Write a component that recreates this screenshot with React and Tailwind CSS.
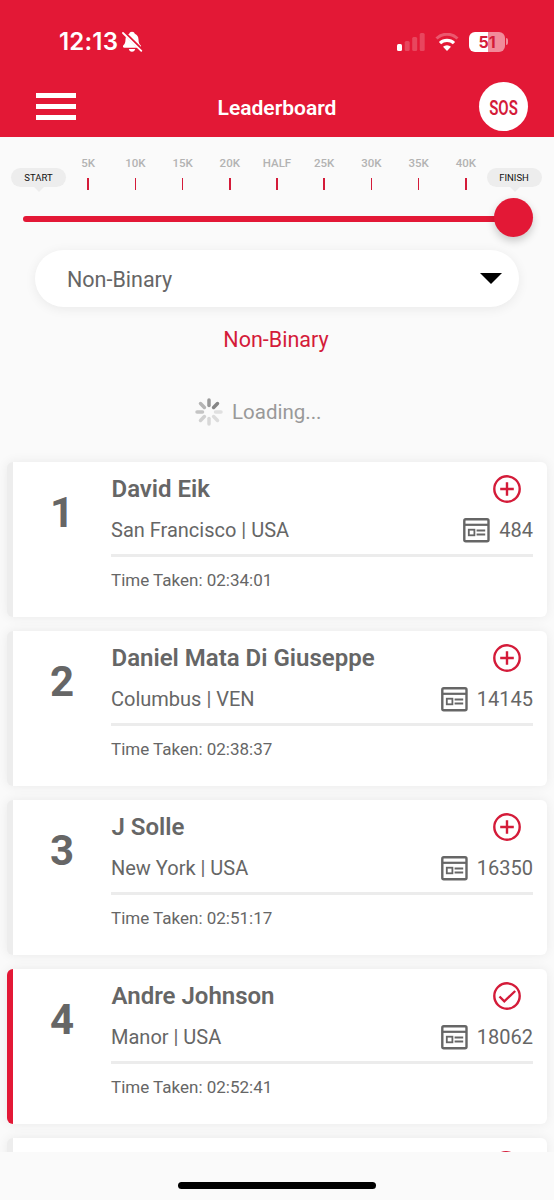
const marks = ['5K', '10K', '15K', '20K', 'HALF', '25K', '30K', '35K', '40K'];

const runners = [
  { rank: 1, name: 'David Eik', place: 'San Francisco | USA', bib: '484', time: '02:34:01' },
  { rank: 2, name: 'Daniel Mata Di Giuseppe', place: 'Columbus | VEN', bib: '14145', time: '02:38:37' },
  { rank: 3, name: 'J Solle', place: 'New York | USA', bib: '16350', time: '02:51:17' },
  { rank: 4, name: 'Andre Johnson', place: 'Manor | USA', bib: '18062', time: '02:52:41', following: true },
];

function BellOffIcon() {
  return (
    <svg width="21" height="22" viewBox="0 0 21 22" className="ml-[4px]">
      <path
        d="M10 .8c1.500 0 2.500.8 2.800 2 2.500 1 3.600 3 3.700 5.600.1 3 .6 4.400 2.100 5.900.9 1 .4 2.500-1 2.500H2.400c-1.400 0-1.900-1.500-1-2.500 1.500-1.500 2-2.900 2.100-5.900.1-2.600 1.200-4.600 3.700-5.600.3-1.200 1.300-2 2.800-2zM6.800 18.100h6.400c-.3 1.600-1.500 2.700-3.200 2.700s-2.900-1.100-3.200-2.700z"
        fill="white"
      />
      <path d="M2 1.500L20.500 19.500" stroke="#e31836" strokeWidth="3.200" />
      <path d="M1 2L19.300 19.800" stroke="white" strokeWidth="1.800" strokeLinecap="round" />
    </svg>
  );
}

function StatusIcons() {
  return (
    <div className="flex items-center">
      <svg width="28" height="18" viewBox="0 0 28 18" fill="white">
        <rect x="0" y="11" width="5" height="7" rx="1.500" />
        <rect x="7.700" y="8" width="5" height="10" rx="1.500" opacity=".2" />
        <rect x="15.200" y="4" width="5" height="14" rx="1.500" opacity=".2" />
        <rect x="22.700" y="0" width="5" height="18" rx="1.500" opacity=".2" />
      </svg>
      <svg width="24" height="18" viewBox="0 0 24 18" fill="none" stroke="white" className="ml-[10px]">
        <path d="M1.500 5.500a15 15 0 0 1 21 0" strokeWidth="3" opacity=".28" />
        <path d="M5 10.200a10 10 0 0 1 14 0" strokeWidth="3.200" />
        <path d="M12 18l-4-4.200a5.800 5.800 0 0 1 8 0z" fill="white" stroke="none" />
      </svg>
      <div className="ml-[10px] flex h-5 w-9 items-center justify-center rounded-[6px] bg-linear-to-r from-white from-52% to-[#f18b9a] to-52% font-[Inter] text-[16px] font-bold text-[#d41b39]">
        51
      </div>
      <div className="ml-px h-[7px] w-[2px] rounded-r-full bg-[#f18b9a]"></div>
    </div>
  );
}

function Header() {
  return (
    <header className="h-[137px] bg-[#e31836] text-white">
      <div className="flex h-[83px] items-center justify-between pr-[46px] pl-[59px]">
        <div className="flex items-center font-[Inter] text-[24px] font-semibold tracking-[0.2px]">
          12:13
          <BellOffIcon />
        </div>
        <StatusIcons />
      </div>
      <div className="-mt-px grid h-[46px] grid-cols-3 items-center pr-[26px] pl-[36px]">
        <div className="flex w-10 flex-col gap-[6px]">
          <span className="h-[5px] bg-white"></span>
          <span className="h-[5px] bg-white"></span>
          <span className="h-[5px] bg-white"></span>
        </div>
        <h1 className="mt-[4px] -ml-[10px] text-center text-[21px] font-semibold">Leaderboard</h1>
        <button className="size-[49px] justify-self-end rounded-full bg-white text-[20px] font-semibold text-[#d41b39]">
          <span className="block scale-x-75 pt-[2px]">SOS</span>
        </button>
      </div>
    </header>
  );
}

function Bubble({ children }) {
  return (
    <div className="relative mt-[31px] flex h-[19px] w-[55px] items-center justify-center rounded-full bg-[#ededed] pt-px text-[9.5px] text-[#111]">
      {children}
      <span className="absolute top-[19px] left-[23px] border-x-[5px] border-t-[5px] border-x-transparent border-t-[#ededed]"></span>
    </div>
  );
}

function DistanceSlider() {
  return (
    <section className="h-[113px]">
      <div className="flex h-[61px] pl-[11px]">
        <Bubble>START</Bubble>
        <div className="-mr-[3px] -ml-[1.5px] flex w-[425px]">
          {marks.map((mark) => (
            <div key={mark} className="flex flex-1 flex-col items-center pt-[18px]">
              <span className="text-[11.5px] leading-4 font-medium text-[#b3b3b3]">{mark}</span>
              <span className="mt-[7px] h-3 w-[1.5px] bg-[#d41b39]"></span>
            </div>
          ))}
        </div>
        <Bubble>FINISH</Bubble>
      </div>
      <div className="flex h-[39px] items-center pl-[23px]">
        <div className="mt-[3px] h-[6px] w-[480px] rounded-full bg-[#e31836]"></div>
        <div className="-ml-[9px] size-[39px] rounded-full bg-[#e31836] shadow-[0_4px_8px_rgba(0,0,0,0.2)]"></div>
      </div>
    </section>
  );
}

function Spinner() {
  const shades = ['#999', '#858585', '#e0e0e0', '#dcdcdc', '#d8d8d8', '#d0d0d0', '#c4c4c4', '#b4b4b4'];
  return (
    <svg width="28" height="28" viewBox="-14 -14 28 28" strokeWidth="3.500" strokeLinecap="round">
      {shades.map((shade, i) => (
        <path key={i} d="M0-6.500V-12" stroke={shade} transform={`rotate(${i * 45})`} />
      ))}
    </svg>
  );
}

function BibIcon() {
  return (
    <svg width="27" height="25" viewBox="0 0 27 25" fill="none" stroke="#666" className="mt-px">
      <rect x="1.300" y="1.300" width="24.200" height="22" rx="1.500" strokeWidth="2.400" />
      <path d="M1 6.800h25" strokeWidth="2.200" />
      <rect x="5.800" y="11.700" width="5.600" height="5.600" strokeWidth="1.800" />
      <path d="M13.600 12.500h8.600M13.600 16.500h8.600" strokeWidth="1.800" />
    </svg>
  );
}

function FollowIcon({ following }) {
  return (
    <svg width="28" height="28" viewBox="0 0 28 28" fill="none" stroke="#d41b39" strokeWidth="2.400">
      <circle cx="14" cy="14" r="12.700" />
      {following ? <path d="M6.500 14.500l4.800 4.800L22.200 9" /> : <path d="M14 7.200v13.600M7.200 14h13.600" />}
    </svg>
  );
}

function RunnerCard({ runner }) {
  return (
    <article
      className={`flex h-[155px] shrink-0 rounded-[6px] border-l-[6px] bg-white text-[#666] shadow-[0_0_12px_rgba(0,0,0,0.07)] ${
        runner.following ? 'border-[#e31836]' : 'border-[#ededed]'
      }`}
    >
      <div className="w-[98px] pt-[29px] text-center text-[42px] leading-[44px] font-bold">{runner.rank}</div>
      <div className="w-[422px]">
        <div className="flex h-[54px] items-center justify-between pr-[12.5px]">
          <h2 className="pl-[0.5px] text-[24px] font-semibold whitespace-nowrap">{runner.name}</h2>
          <FollowIcon following={runner.following} />
        </div>
        <div className="flex h-[41px] items-center justify-between border-b-[3px] border-[#ececec] pb-[10px] text-[20px] font-[450]">
          <span>{runner.place}</span>
          <span className="flex items-center gap-[9px]">
            <BibIcon />
            <span>{runner.bib}</span>
          </span>
        </div>
        <p className="pt-[11px] text-[17px] leading-[24px] font-[450]">Time Taken: {runner.time}</p>
      </div>
    </article>
  );
}

export default function App() {
  return (
    <div className="flex h-[1200px] w-[554px] flex-col overflow-hidden bg-[#fafafa] font-[Roboto,sans-serif]">
      <Header />
      <DistanceSlider />
      <div className="mx-[35px] flex h-[57px] w-[484px] shrink-0 items-center justify-between rounded-full bg-white pr-[17px] pl-8 text-[21.5px] text-[#666] shadow-[0_2px_12px_rgba(0,0,0,0.07)]">
        <span className="pt-[3px]">Non-Binary</span>
        <svg width="22" height="11" viewBox="0 0 22 12" preserveAspectRatio="none">
          <path d="M0 0h22L11 12z" />
        </svg>
      </div>
      <p className="mt-[17px] h-8 pr-[2px] text-center text-[21.5px] leading-8 text-[#d41b39]">Non-Binary</p>
      <div className="mt-[40px] flex h-8 items-center gap-[9px] pl-[195px] text-[20.5px] text-[#999]">
        <Spinner />
        Loading...
      </div>
      <main className="mt-[24px] flex h-[700px] shrink-0 flex-col gap-[14px] overflow-hidden pt-[9.5px] pr-[7px] pl-[7px]">
        {runners.map((runner) => (
          <RunnerCard key={runner.rank} runner={runner} />
        ))}
        <article className="flex h-[155px] shrink-0 justify-end rounded-[6px] border-l-[6px] border-[#ededed] bg-white pt-[13px] pr-[27px] shadow-[0_0_12px_rgba(0,0,0,0.07)]">
          <FollowIcon />
        </article>
      </main>
      <div className="mx-auto mt-[30px] h-[7px] w-[198px] rounded-full bg-black"></div>
    </div>
  );
}
